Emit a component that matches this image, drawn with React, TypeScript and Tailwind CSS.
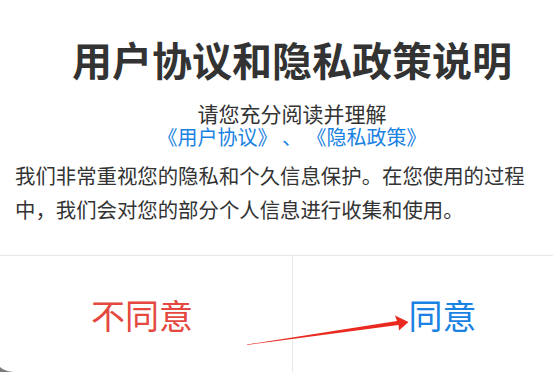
import React from 'react'

const font = '"Noto Sans CJK SC", "Noto Sans", sans-serif'

// red hand-drawn arrow pointing at the agree button
function Arrow() {
  return (
    <svg
      className="absolute left-0 top-0 pointer-events-none"
      width={553}
      height={372}
      viewBox="0 0 553 372"
    >
      <polygon
        points="247,344.5 397,321 395,315.5 408.5,322 399,330.5 398.5,325 247,345"
        fill="#ea2a20"
      />
    </svg>
  )
}

export default function App() {
  return (
    <div
      className="relative w-[553px] h-[372px] overflow-hidden bg-[#7d7d7d]"
      style={{ fontFamily: font }}
    >
      <div className="ml-[-8px] w-[600px] h-[372px] bg-white rounded-bl-[22px] flex flex-col">
        {/* content */}
        <div className="h-[256px] border-b border-[#e8e8e8] flex flex-col items-center pt-[39px]">
          <h1 className="text-[40px] leading-[40px] font-semibold text-[#333333]">用户协议和隐私政策说明</h1>
          <p className="mt-[23px] leading-[22px] text-center">
            <span className="text-[21px] text-[#333333]">请您充分阅读并理解</span>
            <br />
            <span className="text-[20px] text-[#1a82e2] whitespace-pre">《用户协议》 、 《隐私政策》</span>
          </p>
          <p className="self-start mt-[10px] pl-[23px] text-[20.4px] leading-[33.5px] text-[#333333] whitespace-nowrap">
            我们非常重视您的隐私和个久信息保护。在您使用的过程
            <br />
            中，我们会对您的部分个人信息进行收集和使用。
          </p>
        </div>

        {/* buttons */}
        <div className="flex-1 flex">
          <button className="w-[300px] flex items-center justify-center text-[34px] text-[#e4483e]">
            不同意
          </button>
          <button className="w-[300px] border-l border-[#e8e8e8] flex items-center justify-center text-[34px] text-[#1a82e2]">
            同意
          </button>
        </div>
      </div>
      <Arrow />
    </div>
  )
}
